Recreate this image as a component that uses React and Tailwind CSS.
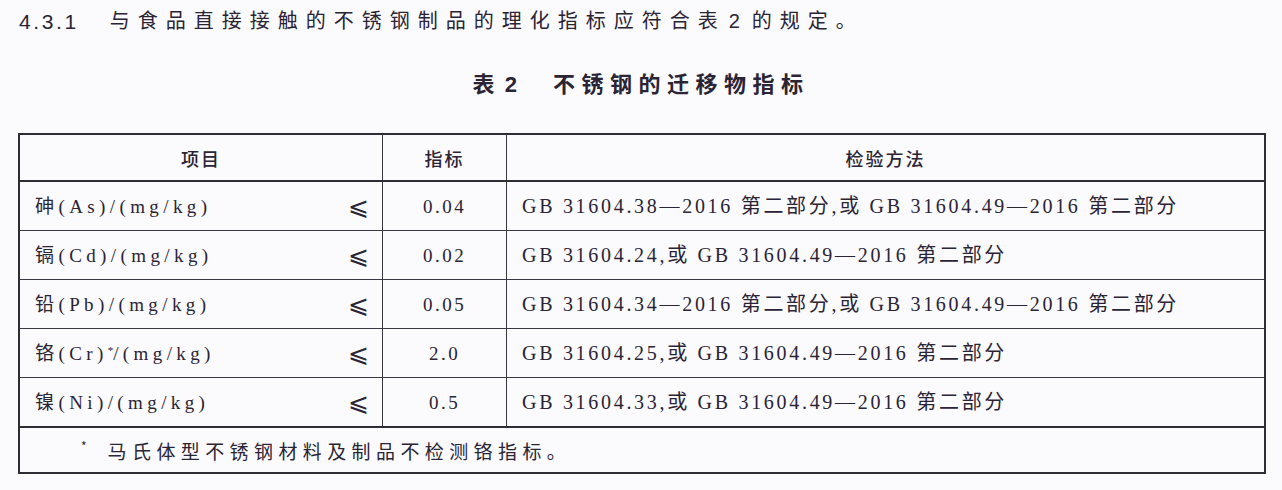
import React from "react";

const rows = [
  { name: "砷(As)/(mg/kg)", value: "0.04", method: "GB 31604.38—2016 第二部分,或 GB 31604.49—2016 第二部分" },
  { name: "镉(Cd)/(mg/kg)", value: "0.02", method: "GB 31604.24,或 GB 31604.49—2016 第二部分" },
  { name: "铅(Pb)/(mg/kg)", value: "0.05", method: "GB 31604.34—2016 第二部分,或 GB 31604.49—2016 第二部分" },
  { name: "铬(Cr)", sup: "*", rest: "/(mg/kg)", value: "2.0", method: "GB 31604.25,或 GB 31604.49—2016 第二部分" },
  { name: "镍(Ni)/(mg/kg)", value: "0.5", method: "GB 31604.33,或 GB 31604.49—2016 第二部分" },
];

const App = () => {
  return (
    <div className="w-[1282px] h-[490px] overflow-hidden bg-[#fbfbfe] text-[#2a2434]">
      {/* clause line */}
      <div className="h-[42px] pl-[19px] flex items-center font-['Liberation_Sans','Noto_Sans_CJK_SC',sans-serif] text-[20px] leading-none">
        <span className="text-[21px] tracking-[2.6px]">4.3.1</span>
        <span className="ml-[31px] tracking-[8px]">
          与食品直接接触的不锈钢制品的理化指标应符合表<span className="ml-[3px] mr-[4px]">2</span>的规定。
        </span>
      </div>

      {/* table title */}
      <div className="h-[86px] flex items-center justify-center font-['Liberation_Sans','Noto_Sans_CJK_SC',sans-serif] text-[22px] font-bold leading-none">
        <span>表</span>
        <span className="ml-[10px]">2</span>
        <span className="ml-[36px] tracking-[6.5px]">不锈钢的迁移物指标</span>
      </div>

      <div className="mt-[5px] ml-[18px] w-[1248px] border-2 border-[#2e2c35] font-['Liberation_Serif','Noto_Sans_CJK_SC',serif] text-[19px] leading-none">
        <div className="grid grid-cols-[363px_124px_1fr] h-[47px] border-b-2 border-[#2e2c35] font-['Noto_Sans_CJK_SC',sans-serif] text-[18px] font-medium">
          <div className="flex items-center justify-center border-r border-[#3a3842] tracking-[2px]">项目</div>
          <div className="flex items-center justify-center border-r border-[#3a3842] tracking-[2px]">指标</div>
          <div className="flex items-center justify-center tracking-[2px]">检验方法</div>
        </div>
        {rows.map((r, i) => (
          <div
            key={i}
            className={
              i < rows.length - 1
                ? "grid grid-cols-[363px_124px_1fr] h-[49px] border-b border-[#3a3842]"
                : "grid grid-cols-[363px_124px_1fr] h-[48px]"
            }
          >
            <div className="flex items-center justify-between pl-[15px] pr-[13px] border-r border-[#3a3842]">
              <span className="tracking-[4.4px]">
                {r.name}
                {r.sup && <sup className="text-[11px] tracking-normal">{r.sup}</sup>}
                {r.rest}
              </span>
              <span className="font-['DejaVu_Sans',sans-serif] text-[25px] font-light leading-none">⩽</span>
            </div>
            <div className="flex items-center justify-center border-r border-[#3a3842] tracking-[2.5px]">{r.value}</div>
            <div className="flex items-center pl-[15px] text-[20px] tracking-[2.7px]">{r.method}</div>
          </div>
        ))}
        <div className="h-[46px] border-t-2 border-[#2e2c35] flex items-center pl-[61px] font-['Noto_Sans_CJK_SC',sans-serif] text-[19px]">
          <span className="text-[12px] -mt-[8px]">*</span>
          <span className="ml-[21px] tracking-[5.4px]">马氏体型不锈钢材料及制品不检测铬指标。</span>
        </div>
      </div>
    </div>
  );
};

export default App;
